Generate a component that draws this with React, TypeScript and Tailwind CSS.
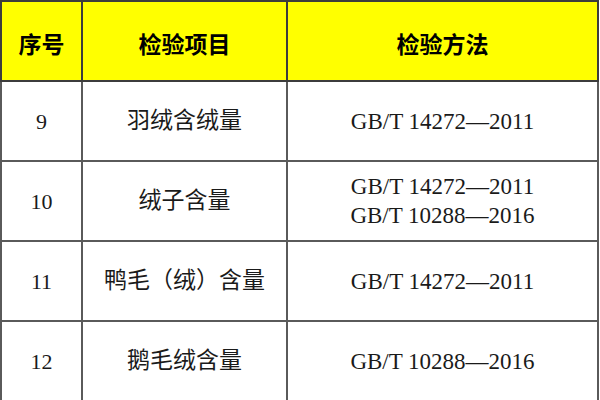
import React from "react";

const rows = [
  { no: "9", item: "羽绒含绒量", methods: ["GB/T 14272—2011"] },
  { no: "10", item: "绒子含量", methods: ["GB/T 14272—2011", "GB/T 10288—2016"] },
  { no: "11", item: "鸭毛（绒）含量", methods: ["GB/T 14272—2011"] },
  { no: "12", item: "鹅毛绒含量", methods: ["GB/T 10288—2016"] },
];

const cjk = "font-['Liberation_Serif','Noto_Sans_CJK_SC',serif]";

export default function App() {
  return (
    <div className="w-[600px] h-[400px] bg-white">
      <table className="w-[599px] h-[399px] border-collapse table-fixed text-[#1a1a1a]">
        <colgroup>
          <col className="w-[81px]" />
          <col className="w-[205px]" />
          <col />
        </colgroup>
        <thead>
          <tr className="h-[80px] bg-[#ffff00]">
            {["序号", "检验项目", "检验方法"].map((h) => (
              <th
                key={h}
                className="border-2 border-[#3c3c3c] text-center align-middle pt-[4px] text-[23px] font-bold text-black font-['Noto_Sans_CJK_SC',sans-serif]"
              >
                {h}
              </th>
            ))}
          </tr>
        </thead>
        <tbody>
          {rows.map((r) => (
            <tr key={r.no} className="h-[80px]">
              <td className={`border-2 border-[#5a5a5a] text-center align-middle text-[22px] ${cjk}`}>
                {r.no}
              </td>
              <td className={`border-2 border-[#5a5a5a] text-center align-middle text-[23px] ${cjk}`}>
                {r.item}
              </td>
              <td className={`border-2 border-[#5a5a5a] text-center align-middle text-[23px] leading-[29px] ${cjk}`}>
                {r.methods.map((m) => (
                  <div key={m}>{m}</div>
                ))}
              </td>
            </tr>
          ))}
        </tbody>
      </table>
    </div>
  );
}
